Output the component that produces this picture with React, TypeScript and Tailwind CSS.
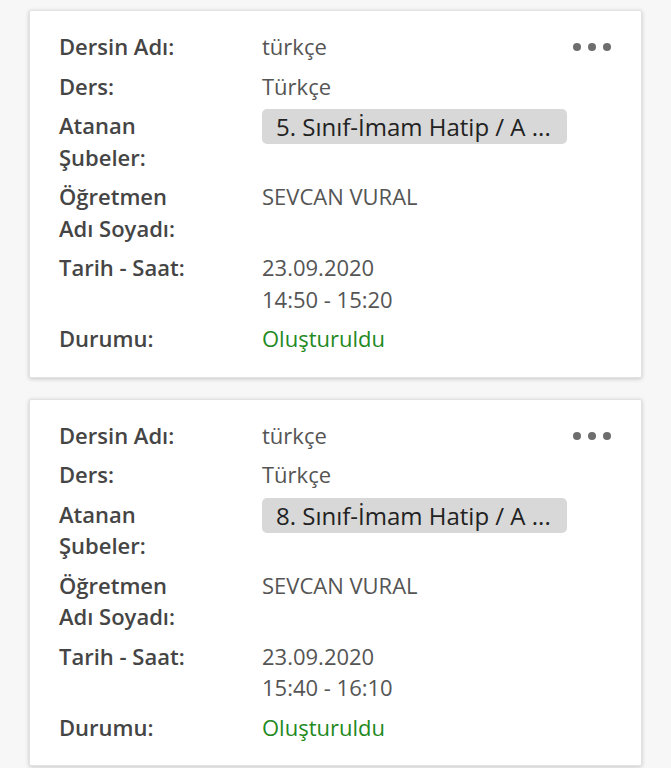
import React from 'react';

type Lesson = {
  name: string;
  course: string;
  branch: string;
  teacher: string;
  date: string;
  time: string;
  status: string;
};

const lessons: Lesson[] = [
  {
    name: 'türkçe',
    course: 'Türkçe',
    branch: '5. Sınıf-İmam Hatip / A ...',
    teacher: 'SEVCAN VURAL',
    date: '23.09.2020',
    time: '14:50 - 15:20',
    status: 'Oluşturuldu',
  },
  {
    name: 'türkçe',
    course: 'Türkçe',
    branch: '8. Sınıf-İmam Hatip / A ...',
    teacher: 'SEVCAN VURAL',
    date: '23.09.2020',
    time: '15:40 - 16:10',
    status: 'Oluşturuldu',
  },
];

const Row: React.FC<{ label: React.ReactNode; children: React.ReactNode }> = ({ label, children }) => (
  <div className="flex">
    <div className="w-[203px] shrink-0 font-semibold text-[#454545]">{label}</div>
    <div className="flex-1 text-[#555]">{children}</div>
  </div>
);

const LessonCard: React.FC<{ lesson: Lesson }> = ({ lesson }) => (
  <div className="relative bg-white border border-[#e2e2e2] rounded-[2px] shadow-[0_1px_4px_rgba(0,0,0,0.2)] pl-[29px] pr-[30px] pt-[20px] pb-[22px]">
    <div className="absolute right-[30px] top-[32px] flex gap-[7px]">
      <span className="w-[8px] h-[8px] rounded-full bg-[#6e6e6e]" />
      <span className="w-[8px] h-[8px] rounded-full bg-[#6e6e6e]" />
      <span className="w-[8px] h-[8px] rounded-full bg-[#6e6e6e]" />
    </div>
    <div className="flex flex-col gap-[8px] text-[22px] leading-[31.5px]">
      <Row label="Dersin Adı:">{lesson.name}</Row>
      <Row label="Ders:">{lesson.course}</Row>
      <Row label={<>Atanan<br />Şubeler:</>}>
        <span className="inline-block mt-[-1px] w-[305px] h-[35px] rounded-[5px] bg-[#d8d8d8] pl-[14px] text-[24px] text-[#222] leading-[35px] whitespace-nowrap">
          {lesson.branch}
        </span>
      </Row>
      <Row label={<>Öğretmen<br />Adı Soyadı:</>}>{lesson.teacher}</Row>
      <Row label="Tarih - Saat:">
        <div>{lesson.date}</div>
        <div>{lesson.time}</div>
      </Row>
      <Row label="Durumu:">
        <span className="text-[#1f8a1f]">{lesson.status}</span>
      </Row>
    </div>
  </div>
);

export default function App() {
  return (
    <div className="min-h-screen bg-[#f7f7f7] px-[29px] pt-[10px] pb-[20px] font-['Open_Sans',sans-serif]">
      <div className="flex flex-col gap-[21px]">
        {lessons.map((l, i) => (
          <LessonCard key={i} lesson={l} />
        ))}
      </div>
    </div>
  );
}
